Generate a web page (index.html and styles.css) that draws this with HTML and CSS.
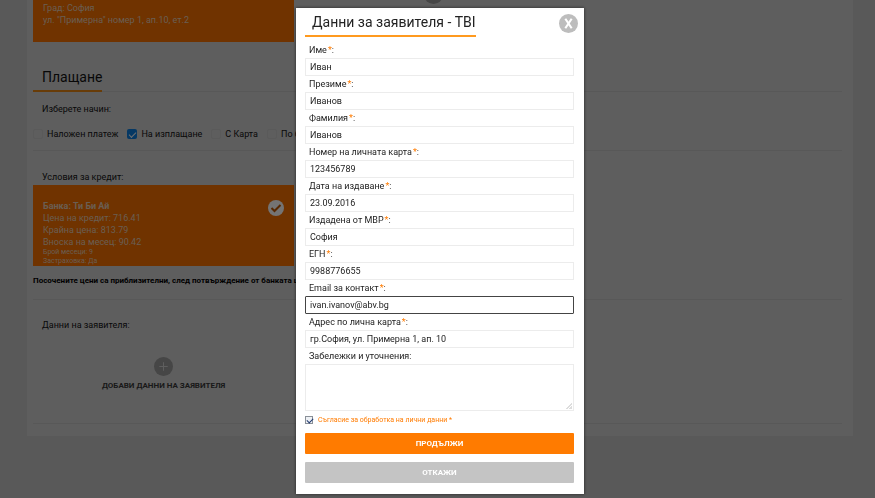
FILE: index.html
```html
<!DOCTYPE html>
<html lang="bg">
<head>
    <meta charset="UTF-8">
    <meta name="viewport" content="width=device-width, initial-scale=1.0">
    <title>Данни за заявителя - TBI</title>
    <link rel="stylesheet" href="styles.css">
</head>
<body>
    <main class="checkout">
        <div class="cards">
            <div class="card card-address">
                <p>Град: София</p>
                <p>ул. "Примерна" номер 1, ап.10, ет.2</p>
            </div>
            <div class="card-add">
                <span class="plus"><svg viewBox="0 0 18 18"><path d="M9 5v8M5 9h8"/></svg></span>
            </div>
        </div>

        <div class="heading"><h2>Плащане</h2></div>

        <section class="section section-payment">
            <h3>Изберете начин:</h3>
            <div class="payments">
                <label><input type="checkbox" class="pay-box"><span>Наложен платеж</span></label>
                <label><input type="checkbox" class="pay-box" checked><span>На изплащане</span></label>
                <label><input type="checkbox" class="pay-box"><span>С Карта</span></label>
                <label><input type="checkbox" class="pay-box"><span>По банка</span></label>
            </div>
        </section>

        <section class="section section-credit">
            <h3>Условия за кредит:</h3>
            <div class="cards">
                <div class="card card-credit">
                    <div class="card-text">
                        <p><strong>Банка: Ти Би Ай</strong></p>
                        <p>Цена на кредит: 716.41</p>
                        <p>Крайна цена: 813.79</p>
                        <p>Вноска на месец: 90.42</p>
                        <p class="small">Брой месеци: 9</p>
                        <p class="small">Застраховка: Да</p>
                    </div>
                    <svg class="check" viewBox="0 0 16 16"><circle cx="8" cy="8" r="8"/><path d="M3.5 8l3 3 6-6"/></svg>
                </div>
            </div>
            <p class="note">Посочените цени са приблизителни, след потвърждение от банката ще п</p>
        </section>

        <section class="section section-applicant">
            <h3>Данни на заявителя:</h3>
            <div class="cards">
                <button type="button" class="card-add">
                    <span class="plus"><svg viewBox="0 0 18 18"><path d="M9 5v8M5 9h8"/></svg></span>
                    ДОБАВИ ДАННИ НА ЗАЯВИТЕЛЯ
                </button>
            </div>
        </section>
    </main>

    <div class="overlay">
        <form class="modal">
            <div class="modal-head">
                <h1>Данни за заявителя - TBI</h1>
                <button type="button" class="close" aria-label="Затвори">
                    <svg viewBox="0 0 18 18"><path d="M6 4.500l6 9M12 4.500l-6 9"/></svg>
                </button>
            </div>

            <label for="first-name">Име<i>*</i>:</label>
            <input type="text" id="first-name" value="Иван">
            <label for="middle-name">Презиме<i>*</i>:</label>
            <input type="text" id="middle-name" value="Иванов">
            <label for="last-name">Фамилия<i>*</i>:</label>
            <input type="text" id="last-name" value="Иванов">
            <label for="card-number">Номер на личната карта<i>*</i>:</label>
            <input type="text" id="card-number" value="123456789">
            <label for="issue-date">Дата на издаване<i>*</i>:</label>
            <input type="text" id="issue-date" value="23.09.2016">
            <label for="issued-by">Издадена от МВР<i>*</i>:</label>
            <input type="text" id="issued-by" value="София">
            <label for="egn">ЕГН<i>*</i>:</label>
            <input type="text" id="egn" value="9988776655">
            <label for="email">Email за контакт<i>*</i>:</label>
            <input type="text" id="email" class="active" value="ivan.ivanov@abv.bg">
            <label for="address">Адрес по лична карта<i>*</i>:</label>
            <input type="text" id="address" value="гр.София, ул. Примерна 1, ап. 10">
            <label for="notes">Забележки и уточнения:</label>
            <textarea id="notes"></textarea>

            <div class="agree">
                <input type="checkbox" id="agree" checked>
                <label for="agree">Съгласие за обработка на лични данни *</label>
            </div>

            <button type="submit" class="btn btn-next">ПРОДЪЛЖИ</button>
            <button type="button" class="btn btn-cancel">ОТКАЖИ</button>
        </form>
    </div>
</body>
</html>
```

FILE: styles.css
```css
* {
    box-sizing: border-box;
}
html, body {
    height: 100%;
    margin: 0;
    overflow: hidden;
}
body {
    font-family: Roboto, Arial, sans-serif;
    font-size: 9px;
    color: #333;
    background: #b3b3b3;
}
h1, h2, h3, p {
    margin: 0;
    font-weight: 400;
}
button, input, textarea {
    font-family: inherit;
    font-size: 9px;
    margin: 0;
}

/* the page behind, scrolled down to the payment section */
.checkout {
    margin: -44px 22px 0 27px;
    padding: 0 11px 12px 6px;
    background: #bcbcbc;
    display: flow-root;
}
.cards {
    display: grid;
    grid-template-columns: repeat(3, 32.3%);
    gap: 9px;
}
.card {
    background: #e06600;
    color: #d4bca4;
    padding: 0 10px;
    font-size: 9px;
    line-height: 12px;
}
.card-address {
    height: 86px;
    padding-top: 46px;
}
.card-add {
    display: flex;
    flex-direction: column;
    align-items: center;
    gap: 5px;
    padding: 29px 0 0;
    border: none;
    background: none;
    color: #333;
    font-size: 8px;
    font-weight: 700;
}
.section .card-add {
    padding-top: 24px;
}
.plus {
    width: 19px;
    height: 19px;
    border-radius: 50%;
    background: #8c8c8c;
}
.plus svg {
    display: block;
    fill: none;
    stroke: #bcbcbc;
}
.heading {
    margin-top: 22px;
    border-bottom: 1px solid #b0b0b0;
    display: flex;
}
.heading h2 {
    padding: 0 0 0 9px;
    margin-bottom: -1px;
    font-size: 14px;
    line-height: 26px;
    color: #111;
    border-bottom: 2px solid #d07810;
}
.section {
    border-bottom: 1px solid #b0b0b0;
}
.section h3 {
    padding-left: 9px;
    font-size: 9px;
    line-height: 16px;
    color: #111;
}
.section-payment {
    padding: 9px 0;
}
.payments {
    display: flex;
    gap: 9px;
    padding-top: 10px;
}
.payments label {
    display: flex;
    align-items: center;
    gap: 4px;
    line-height: 14px;
    color: #111;
}
.pay-box {
    appearance: none;
    width: 10px;
    height: 10px;
    border: 1px solid #b4b4b4;
    border-radius: 2px;
}
.pay-box:checked {
    border: none;
    background: #0a70c8;
}
.pay-box:checked::before {
    content: "";
    display: block;
    width: 6px;
    height: 3px;
    margin: 3px 0 0 2px;
    border: solid #ddd;
    border-width: 0 0 1px 1px;
    transform: rotate(-45deg);
}
.section-credit {
    padding: 18px 0 11px;
}
.card-credit {
    display: flex;
    justify-content: space-between;
    height: 81px;
    padding-top: 15px;
}
.card .small {
    font-size: 7px;
    line-height: 9px;
}
.check {
    width: 16px;
    height: 16px;
    fill: #e8e8e8;
}
.check path {
    fill: none;
    stroke: #b05000;
    stroke-width: 2;
}
.note {
    padding-top: 8px;
    font-size: 8px;
    font-weight: 700;
    line-height: 14px;
    color: #000;
    white-space: nowrap;
}
.section-applicant {
    padding: 17px 0 0;
}
.section-applicant .cards {
    height: 90px;
}

/* modal */
.overlay {
    position: fixed;
    inset: 0;
    display: flex;
    justify-content: center;
    align-items: flex-start;
    padding: 8px 0 4px 5px;
    background: rgba(0, 0, 0, 0.5);
}
.modal {
    display: flex;
    flex-direction: column;
    width: 100%;
    max-width: 288px;
    padding: 0 10px 11px 9px;
    background: #fff;
    box-shadow: 0 0 3px rgba(0, 0, 0, 0.6);
}
.modal-head {
    display: flex;
    justify-content: space-between;
    align-items: flex-start;
    margin-bottom: 6px;
}
.modal-head h1 {
    padding: 1px 0 0 7px;
    margin-bottom: -1px;
    font-size: 14px;
    line-height: 26px;
    border-bottom: 2px solid #ff9a1f;
    color: #222;
}
.close {
    width: 19px;
    height: 19px;
    margin: 6px -4px 0 0;
    padding: 0;
    border: none;
    border-radius: 50%;
    background: #bdbdbd;
}
.close svg {
    display: block;
    fill: none;
    stroke: #fff;
    stroke-width: 2;
}
.modal > label {
    padding-left: 4px;
    line-height: 16px;
    color: #222;
}
.modal > label i {
    font-style: normal;
    color: #ff7b00;
    margin-left: 1px;
}
.modal > input {
    height: 18px;
    padding: 0 4px;
    border: 1px solid #ececec;
    color: #222;
    outline: none;
}
.modal > input.active {
    border-color: #444;
    border-radius: 1px;
}
.modal textarea {
    height: 47px;
    border: 1px solid #ececec;
    resize: none;
    /* light grip in the corner */
    background: linear-gradient(135deg, transparent 50%, #ddd 50%, #ddd 60%, transparent 60%, transparent 75%, #ddd 75%) no-repeat right 1px bottom 1px / 6px 6px;
}
.agree {
    display: flex;
    align-items: center;
    gap: 5px;
    height: 18px;
    margin-bottom: 4px;
    font-size: 7px;
    color: #ff7b00;
}
.agree input {
    appearance: none;
    width: 8px;
    height: 8px;
    border: 1px solid #8a9098;
    background: #eef1f5;
}
.agree input:checked::before {
    content: "";
    display: block;
    width: 5px;
    height: 3px;
    margin: 1px 0 0 1px;
    border: solid #223a70;
    border-width: 0 0 1px 1px;
    transform: rotate(-45deg);
}
.btn {
    height: 21px;
    border: none;
    border-radius: 1px;
    font-size: 8px;
    font-weight: 700;
    color: #fff;
}
.btn-next {
    background: #ff7b00;
}
.btn-cancel {
    margin-top: 8px;
    background: #c4c4c4;
}
```
